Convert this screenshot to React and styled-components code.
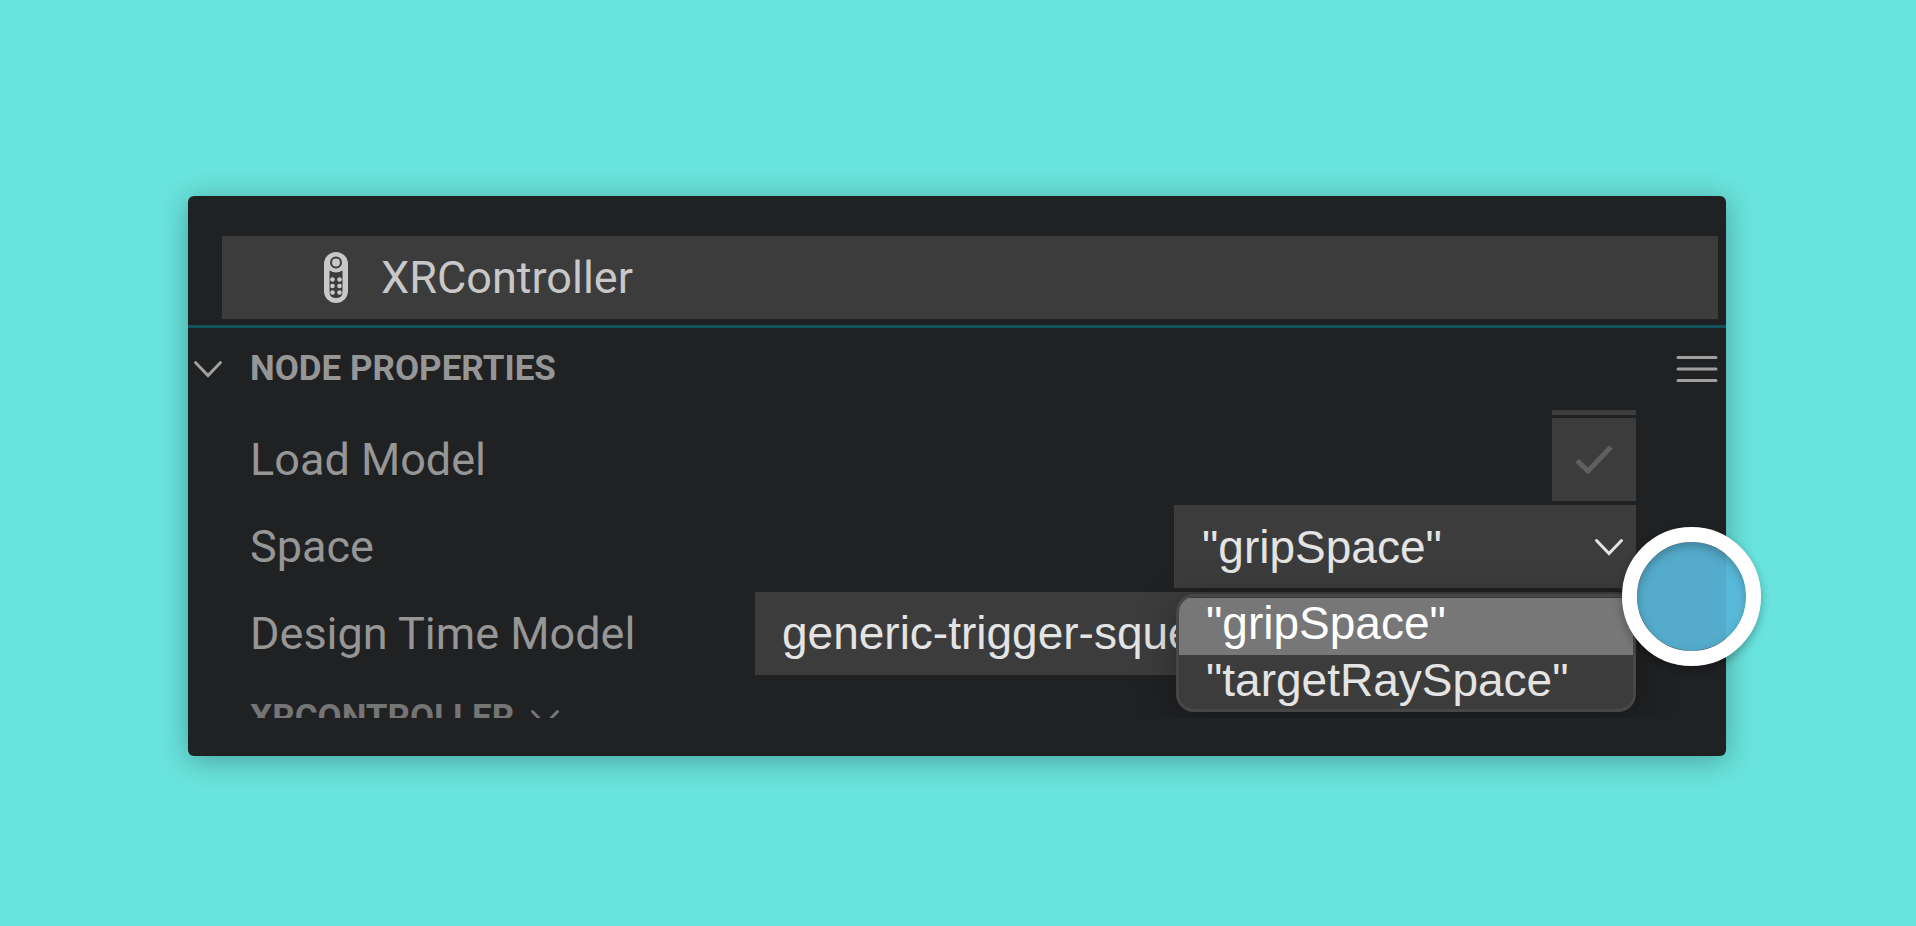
import { useState } from "react";
import styled, { createGlobalStyle } from "styled-components";

const spaces = ['"gripSpace"', '"targetRaySpace"'];

const Chevron = ({ color }) => (
  <svg width="30" height="18" viewBox="0 0 30 18" fill="none" stroke={color} strokeWidth="3" strokeLinecap="round" aria-hidden="true">
    <path d="M2.500 2.500L15 15.500L27.500 2.500" />
  </svg>
);

const RemoteIcon = () => (
  <svg width="24" height="51" viewBox="0 0 24 51" aria-hidden="true">
    <rect width="24" height="51" rx="12" fill="#c8c8c8" />
    <circle cx="12" cy="10.500" r="5" fill="none" stroke="#3c3c3c" strokeWidth="2" />
    <path d="M5.500 18.500Q12 22.500 18.500 18.500V40Q18.500 46 12 46Q5.500 46 5.500 40Z" fill="#3c3c3c" />
    {[27.5, 34, 40.5].map((y) => (
      <g key={y} fill="#c8c8c8">
        <circle cx="8.500" cy={y} r="2.300" />
        <circle cx="15.500" cy={y} r="2.300" />
      </g>
    ))}
  </svg>
);

const MenuIcon = () => (
  <svg width="42" height="28" viewBox="0 0 42 28" stroke="#a0a0a0" strokeWidth="3" strokeLinecap="round" aria-hidden="true">
    <path d="M2 2.500H40M2 14H40M2 25.500H40" />
  </svg>
);

const App = () => {
  const [space, setSpace] = useState(spaces[0]);

  return (
    <Page>
      <GlobalStyle />
      <Panel>
        <Viewport>
          <NodeItem>
            <RemoteIcon />
            <span>XRController</span>
          </NodeItem>
          <Divider />
          <SectionHeader>
            <IconButton aria-label="Collapse section">
              <Chevron color="#a0a0a0" />
            </IconButton>
            <SectionTitle>NODE PROPERTIES</SectionTitle>
            <IconButton aria-label="Section menu">
              <MenuIcon />
            </IconButton>
          </SectionHeader>
          <CutField />
          <Rows>
            <Row>
              <Label htmlFor="load-model">Load Model</Label>
              <CheckCell>
                <Checkbox id="load-model" type="checkbox" defaultChecked disabled />
                <CheckMark viewBox="0 0 38 29" aria-hidden="true">
                  <path d="M2 15.500L13 26L36 2" />
                </CheckMark>
              </CheckCell>
            </Row>
            <Row>
              <Label htmlFor="space">Space</Label>
              <SelectCell>
                <Select id="space" value={space} onChange={(e) => setSpace(e.target.value)}>
                  {spaces.map((name) => (
                    <option key={name}>{name}</option>
                  ))}
                </Select>
                <SelectArrow>
                  <Chevron color="#e4e4e4" />
                </SelectArrow>
                <Menu role="listbox" aria-label="Space">
                  {spaces.map((name) => (
                    <MenuItem
                      key={name}
                      role="option"
                      aria-selected={name === space}
                      $active={name === space}
                      onClick={() => setSpace(name)}
                    >
                      {name}
                    </MenuItem>
                  ))}
                </Menu>
              </SelectCell>
            </Row>
            <Row>
              <Label htmlFor="model">Design Time Model</Label>
              <TextField id="model" defaultValue="generic-trigger-squeeze" />
            </Row>
          </Rows>
          <NextSection>
            <SubHeader>
              <span>XRCONTROLLER</span>
              <Chevron color="#757575" />
            </SubHeader>
          </NextSection>
        </Viewport>
        <Pointer />
      </Panel>
    </Page>
  );
};

export default App;

const GlobalStyle = createGlobalStyle`
  * {
    box-sizing: border-box;
  }
  body {
    margin: 0;
    background: #69e3dd;
    font-family: Roboto, sans-serif;
  }
`;

const Page = styled.main`
  min-height: 100vh;
  padding: 196px 190px 170px 188px;
`;

const Panel = styled.section`
  position: relative;
  padding: 40px 0 38px;
  border-radius: 6px;
  background: #202123;
  box-shadow: 0 4px 28px rgba(0, 0, 0, 0.3);
`;

const Viewport = styled.div`
  overflow: hidden;
`;

const NodeItem = styled.div`
  display: flex;
  align-items: center;
  gap: 33px;
  height: 83px;
  margin: 0 8px 0 34px;
  padding-left: 102px;
  background: #3c3c3c;
  color: #c8c8c8;
  font-size: 45px;
`;

const Divider = styled.hr`
  height: 3px;
  margin: 6px 0 0;
  border: 0;
  background: #12535b;
`;

const SectionHeader = styled.header`
  display: flex;
  align-items: center;
  height: 82px;
  padding: 0 8px 0 5px;
`;

const IconButton = styled.button`
  display: flex;
  padding: 0;
  border: 0;
  background: none;
`;

const SectionTitle = styled.h2`
  flex: 1;
  margin: 0 0 0 27px;
  padding-bottom: 2px;
  color: #969696;
  font-size: 35px;
  font-weight: 700;
`;

const CutField = styled.div`
  width: 84px;
  height: 5px;
  margin: 0 90px 3px auto;
  background: #3c3c3c;
`;

const Rows = styled.div`
  display: flex;
  flex-direction: column;
  gap: 4px;
  padding: 0 90px 0 62px;
`;

const Row = styled.div`
  display: flex;
  align-items: center;
  justify-content: space-between;
  height: 83px;
`;

const Label = styled.label`
  color: #969696;
  font-size: 45px;
`;

const CheckCell = styled.div`
  display: grid;
  place-items: center;
  width: 84px;
  height: 83px;
  background: #3c3c3c;
`;

const Checkbox = styled.input`
  grid-area: 1 / 1;
  width: 100%;
  height: 100%;
  margin: 0;
  appearance: none;
`;

const CheckMark = styled.svg`
  grid-area: 1 / 1;
  width: 38px;
  height: 29px;
  fill: none;
  stroke: #5f5f5f;
  stroke-width: 5px;
  pointer-events: none;
`;

const SelectCell = styled.div`
  position: relative;
  z-index: 1;
  width: 462px;
  height: 83px;
`;

const Select = styled.select`
  width: 100%;
  height: 100%;
  padding: 0 60px 0 28px;
  border: 0;
  border-radius: 0;
  appearance: none;
  background: #3c3c3c;
  color: #e4e4e4;
  font-family: "Liberation Sans", sans-serif;
  font-size: 46px;
`;

const SelectArrow = styled.span`
  position: absolute;
  top: 33px;
  right: 12px;
  display: flex;
  pointer-events: none;
`;

const Menu = styled.ul`
  position: absolute;
  top: 89px;
  right: 0;
  left: 2px;
  margin: 0;
  padding: 1px 0 0;
  overflow: hidden;
  border: 3px solid #474747;
  border-radius: 18px;
  background: #3c3c3c;
  box-shadow: 0 8px 40px rgba(0, 0, 0, 0.3);
  list-style: none;
`;

const MenuItem = styled.li`
  height: 57px;
  padding-left: 27px;
  background: ${(props) => (props.$active ? "#777777" : "transparent")};
  color: ${(props) => (props.$active ? "#ffffff" : "#e4e4e4")};
  font-family: "Liberation Sans", sans-serif;
  font-size: 46px;
  line-height: 51px;

  &:last-child {
    height: 54px;
  }
`;

const TextField = styled.input`
  width: 881px;
  height: 83px;
  padding: 0 27px 2px;
  border: 0;
  background: #3c3c3c;
  color: #e4e4e4;
  font-family: "Liberation Sans", sans-serif;
  font-size: 46px;
`;

const NextSection = styled.div`
  height: 43px;
  overflow: hidden;
`;

const SubHeader = styled.div`
  display: flex;
  align-items: center;
  gap: 16px;
  height: 85px;
  padding-left: 62px;
  color: #757575;
  font-size: 35px;
  font-weight: 700;
`;

const Pointer = styled.div`
  position: absolute;
  top: 331px;
  right: -35px;
  width: 139px;
  height: 139px;
  border: 15px solid #ffffff;
  border-radius: 50%;
  background: rgba(89, 183, 219, 0.92);
  background-clip: padding-box;
  box-shadow: 0 4px 10px rgba(0, 0, 0, 0.3), inset 0 4px 10px rgba(0, 0, 0, 0.25);
  z-index: 2;
`;
